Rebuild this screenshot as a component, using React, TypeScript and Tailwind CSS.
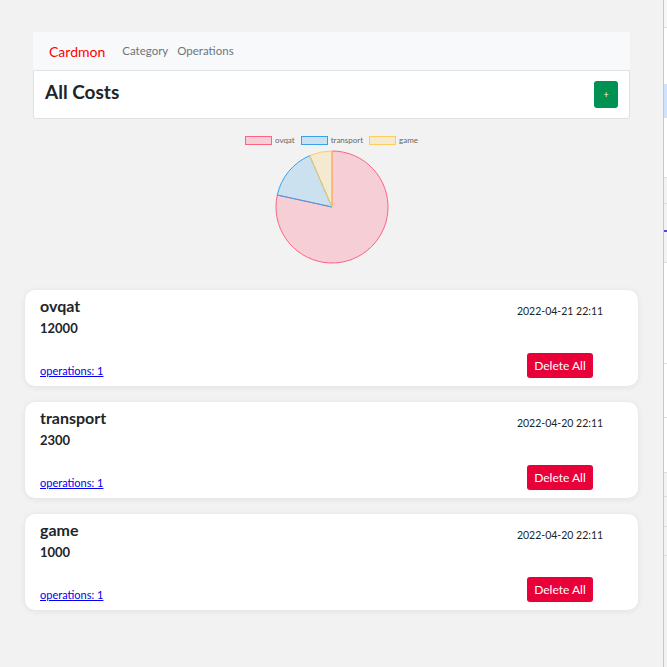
import React from 'react'

interface Cost {
  name: string
  amount: number
  date: string
  ops: number
}

const costs: Cost[] = [
  { name: 'ovqat', amount: 12000, date: '2022-04-21 22:11', ops: 1 },
  { name: 'transport', amount: 2300, date: '2022-04-20 22:11', ops: 1 },
  { name: 'game', amount: 1000, date: '2022-04-20 22:11', ops: 1 },
]

const colors = [
  { fill: 'rgba(255,99,132,0.25)', stroke: 'rgb(255,99,132)' },
  { fill: 'rgba(54,162,235,0.2)', stroke: 'rgb(54,162,235)' },
  { fill: 'rgba(255,206,86,0.2)', stroke: 'rgb(255,206,86)' },
]

function Pie() {
  const total = costs.reduce((s, c) => s + c.amount, 0)
  const cx = 57
  const cy = 57
  const r = 56
  let start = -Math.PI / 2
  const slices = costs.map((c, i) => {
    const angle = (c.amount / total) * Math.PI * 2
    const end = start + angle
    const x1 = cx + r * Math.cos(start)
    const y1 = cy + r * Math.sin(start)
    const x2 = cx + r * Math.cos(end)
    const y2 = cy + r * Math.sin(end)
    const large = angle > Math.PI ? 1 : 0
    const d = `M${cx},${cy} L${x1},${y1} A${r},${r} 0 ${large} 1 ${x2},${y2} Z`
    start = end
    return <path key={i} d={d} fill={colors[i].fill} stroke={colors[i].stroke} strokeWidth={1} />
  })
  return (
    <svg width="114" height="114" viewBox="0 0 114 114">
      {slices}
    </svg>
  )
}

function CostCard({ c }: { c: Cost }) {
  return (
    <div className="flex justify-between h-[96px] bg-white rounded-[10px] shadow-[0_1px_6px_rgba(0,0,0,0.08)] pl-[15px]">
      <div className="flex flex-col pt-[6px] pb-[8px]">
        <div className="text-[16px] leading-[20px] font-bold text-[#212529]">{c.name}</div>
        <div className="mt-[3px] text-[13px] leading-[18px] font-bold text-[#212529]">{c.amount}</div>
        <a href="#" className="mt-auto text-[11px] leading-[14px] text-[#0000ee] underline">
          operations: {c.ops}
        </a>
      </div>
      <div className="flex flex-col items-center w-[100px] mr-[28px] pt-[14px] pb-[8px]">
        <div className="text-[10.5px] leading-[14px] text-[#212529] whitespace-nowrap">{c.date}</div>
        <button className="mt-auto w-[66px] h-[25px] rounded-[3px] bg-[#ea0039] text-white text-[12px]">
          Delete All
        </button>
      </div>
    </div>
  )
}

export default function App() {
  return (
    <div className="flex min-h-[667px] bg-[#f2f2f2] font-['Lato',sans-serif]">
      <div className="w-[663px] shrink-0 pt-8">
        <div className="ml-[33px] w-[597px]">
          <nav className="flex items-center h-[38px] bg-[#f8f9fa] pl-4">
            <span className="text-[14px] text-[#ff0000]">Cardmon</span>
            <span className="ml-[17px] text-[11.5px] text-[#6c757d]">Category</span>
            <span className="ml-[9px] text-[11.5px] text-[#6c757d]">Operations</span>
          </nav>
          <div className="flex items-center justify-between h-[49px] bg-white border border-[#dee2e6] rounded-b-[3px] px-[11px]">
            <h1 className="text-[19px] font-bold text-[#212529] -mt-[5px]">All Costs</h1>
            <button className="w-[24px] h-[27px] rounded-[3px] bg-[#009252] text-[#fff8d0] text-[9px] leading-none">+</button>
          </div>
        </div>

        <div className="flex flex-col items-center mt-[15px]">
          <div className="flex items-center h-[12px] gap-[6px] text-[8px] leading-[12px] text-[#666]">
            {costs.map((c, i) => (
              <div key={c.name} className="flex items-center gap-[3px]">
                <span
                  className="w-[27px] h-[9px] border"
                  style={{ background: colors[i].fill, borderColor: colors[i].stroke }}
                />
                <span>{c.name}</span>
              </div>
            ))}
          </div>
          <div className="mt-[4px]">
            <Pie />
          </div>
        </div>

        <div className="flex flex-col gap-4 ml-[25px] w-[613px] mt-[26px]">
          {costs.map((c) => (
            <CostCard key={c.name} c={c} />
          ))}
        </div>
      </div>

      <div className="flex-1 border-l border-[#c8c8c8]">
        <div className="h-[28px] bg-[#f7f7f7] border-b border-[#ddd]" />
        <div className="h-[56px] bg-white" />
        <div className="h-[34px] bg-[#cfe2ff]" />
        <div className="h-[60px] bg-white border-b border-[#ddd]" />
        <div className="h-[26px] bg-[#f3f3f3] border-b border-[#ddd]" />
        <div className="h-[28px] bg-[#f3f3f3] border-b-2 border-[#5b3cf0]" />
        <div className="h-[31px] bg-[#f3f3f3] border-b border-[#ddd]" />
        <div className="h-[101px] bg-white border-b border-[#ddd]" />
        <div className="h-[54px] bg-white border-b border-[#ddd]" />
        <div className="h-[55px] bg-white border-b border-[#ddd]" />
        <div className="h-[24px] bg-[#f3f3f3] border-b border-[#ddd]" />
        <div className="h-[30px] bg-[#f3f3f3] border-b border-[#ddd]" />
        <div className="h-[29px] bg-[#f3f3f3] border-b border-[#ddd]" />
      </div>
    </div>
  )
}
